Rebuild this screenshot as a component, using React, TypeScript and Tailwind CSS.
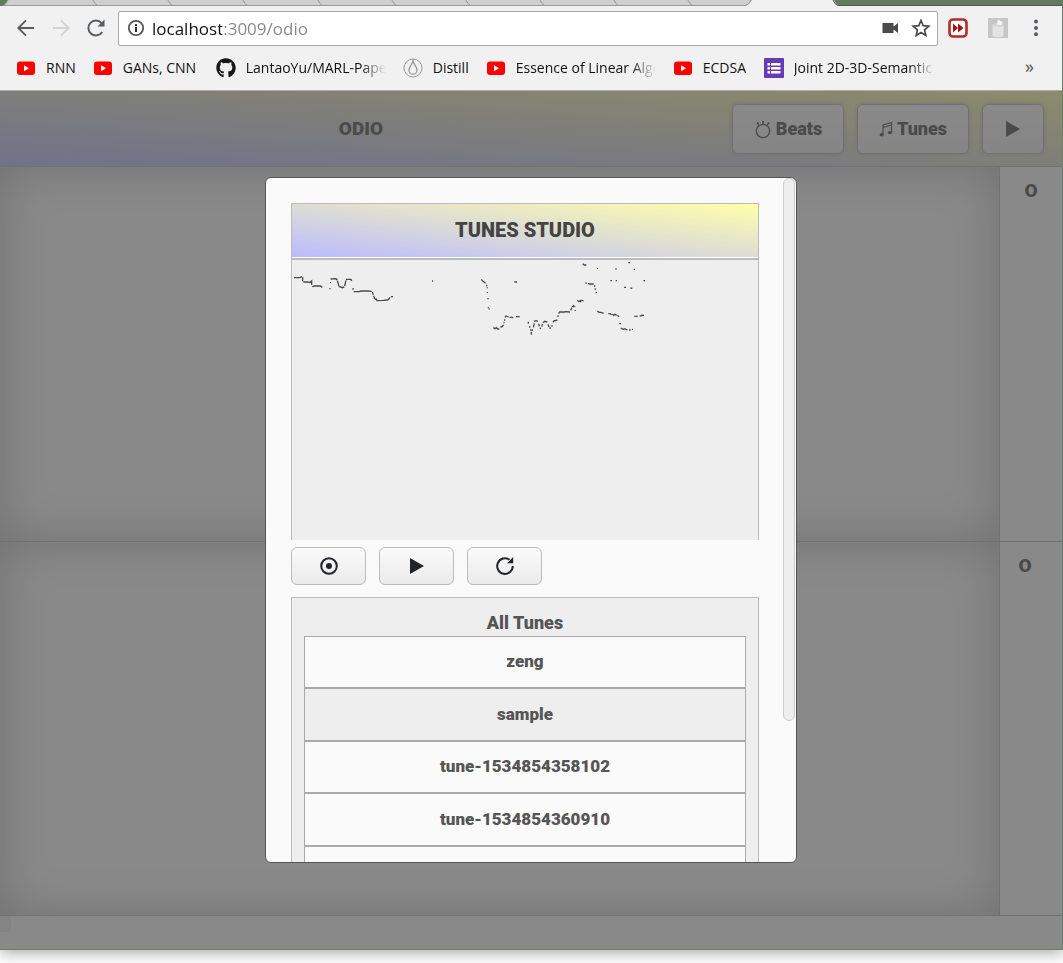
import React from "react";
import { FaGithub } from "react-icons/fa";

const fadeMask = "[mask-image:linear-gradient(90deg,#000_82%,transparent)]";

function YoutubeMark() {
  return (
    <svg viewBox="0 0 20 20" className="size-5 shrink-0" aria-hidden="true">
      <rect x="1" y="3.5" width="18" height="13.5" rx="3" fill="#f00" />
      <path d="M8 7.3v6l5-3z" fill="#fff" />
    </svg>
  );
}

function DistillMark() {
  return (
    <svg viewBox="0 0 20 20" className="size-5 shrink-0" fill="none" stroke="#999" aria-hidden="true">
      <circle cx="10" cy="10" r="9" />
      <path d="M10 3.2c-.9 3.2-4 5.4-4 9a4 4 0 0 0 8 0c0-3.600-3.100-5.800-4-9zM10 1v2.500" strokeWidth="1.300" />
    </svg>
  );
}

function FormMark() {
  return (
    <svg viewBox="0 0 20 20" className="size-5 shrink-0" aria-hidden="true">
      <rect width="20" height="20" rx="1" fill="#673ab7" />
      <g fill="#fff">
        <rect x="3.500" y="5" width="2.500" height="2.500" />
        <rect x="3.500" y="9" width="2.500" height="2.500" />
        <rect x="3.500" y="13" width="2.500" height="2.500" />
        <rect x="7" y="5" width="9.500" height="2.500" />
        <rect x="7" y="9" width="9.500" height="2.500" />
        <rect x="7" y="13" width="9.500" height="2.500" />
      </g>
    </svg>
  );
}

const bookmarks = [
  { label: "RNN", icon: <YoutubeMark />, width: "" },
  { label: "GANs, CNN", icon: <YoutubeMark />, width: "w-[76px]" },
  { label: "LantaoYu/MARL-Papers", icon: <FaGithub className="size-5 shrink-0 text-[#191717]" />, width: "w-[140px] " + fadeMask },
  { label: "Distill", icon: <DistillMark />, width: "w-9" },
  { label: "Essence of Linear Algebra", icon: <YoutubeMark />, width: "w-[140px] " + fadeMask },
  { label: "ECDSA", icon: <YoutubeMark />, width: "w-11" },
  { label: "Joint 2D-3D-Semantic", icon: <FormMark />, width: "w-[141px] " + fadeMask },
];

const separators = [93, 168, 243, 318, 392, 466, 540, 614, 688];

function TabStrip() {
  return (
    <div className="h-1.5 overflow-hidden bg-[#637a60]">
      <svg width="1063" height="6" aria-hidden="true" className="block">
        <path d="M8 0H752L748 5.500H4z" fill="#cfcfcf" />
        <path d="M752 0H834Q836 5 840 6H745Q749 5 752 0z" fill="#f1f1f1" />
        <g fill="none" stroke="#999">
          <path d="M8 0Q6 5 3 5.500H745Q749 5 751 0" />
          {separators.map((x) => (
            <path key={x} d={`M${x} 0q1.500 4 4.500 5.500`} />
          ))}
        </g>
        <path d="M833 0Q835 5 838 5.500H1063" fill="none" stroke="#4a5f48" />
      </svg>
    </div>
  );
}

function AddressBar() {
  return (
    <div className="flex h-11 items-center pr-4 pl-4">
      <button aria-label="Back" className="flex w-5 justify-center">
        <svg viewBox="0 0 20 20" className="size-5" fill="none" stroke="#5a5d60" strokeWidth="1.900">
          <path d="M18 10H2.500M10 2.300L2.300 10l7.700 7.700" />
        </svg>
      </button>
      <button aria-label="Forward" className="ml-[15px] flex w-5 justify-center">
        <svg viewBox="0 0 20 20" className="size-5" fill="none" stroke="#d4d4d4" strokeWidth="1.900">
          <path d="M2 10h15.500M10 2.300l7.700 7.700-7.700 7.700" />
        </svg>
      </button>
      <button aria-label="Reload" className="ml-[15px] flex w-5 justify-center">
        <svg viewBox="0 0 20 20" className="size-5" fill="none" stroke="#5a5d60" strokeWidth="2">
          <path d="M16.200 14A7.500 7.500 0 1 1 15.500 5" />
          <path d="M18.500 1.500V8.500H11.500z" fill="#5a5d60" stroke="none" />
        </svg>
      </button>
      <div className="ml-3 flex h-[35px] flex-1 items-center rounded-xs border border-[#a9a9a9] bg-white pr-1.5 pl-2">
        <svg viewBox="0 0 18 18" className="size-[18px] shrink-0" aria-hidden="true">
          <circle cx="9" cy="9" r="7.200" fill="none" stroke="#555" strokeWidth="1.800" />
          <path d="M8 8h2v5H8zM8 5h2v2H8z" fill="#333" />
        </svg>
        <input
          aria-label="Address"
          defaultValue="localhost:3009/odio"
          className="ml-[7px] h-8 min-w-0 flex-1 bg-[linear-gradient(90deg,#111_70px,#858585_70px)] bg-clip-text font-['Open_Sans','Noto_Sans',sans-serif] text-[17px] text-transparent outline-none"
        />
        <button aria-label="Camera">
          <svg viewBox="0 0 18 18" className="size-[18px]" fill="#4a4a4a">
            <path d="M1.500 4h11v3.500L17 4v10l-4.500-3.500V14h-11z" />
          </svg>
        </button>
        <button aria-label="Bookmark this page" className="ml-3">
          <svg viewBox="0 0 20 20" className="size-5" fill="none" stroke="#4a4a4a" strokeWidth="1.700">
            <path d="M10 2.500l2.200 5.200 5.600.5-4.200 3.700 1.200 5.500-4.800-2.900-4.800 2.900 1.200-5.500-4.200-3.700 5.600-.5z" />
          </svg>
        </button>
      </div>
      <button aria-label="Video speed" className="ml-2.5">
        <svg viewBox="0 0 20 20" className="size-5">
          <rect x="1.500" y="1.500" width="17" height="17" rx="3.500" fill="#fff" stroke="#b52a2a" strokeWidth="2.600" />
          <path d="M5 5.500l5 4.500-5 4.500zM10 5.500l5.500 4.500-5.500 4.500z" fill="#9c1515" />
        </svg>
      </button>
      <button aria-label="Cleaner" className="ml-5">
        <svg viewBox="0 0 20 20" className="size-5">
          <rect width="20" height="20" fill="#c6c6c6" />
          <path d="M4.500 7.500q0-2 5.500-2t5.500 2v9.500q0 2-5.500 2t-5.500-2z" fill="#e4e4e4" />
          <ellipse cx="10" cy="7" rx="5.500" ry="1.700" fill="#d6d6d6" />
          <path d="M9 6.500l1-5 5 3-2 2.500z" fill="#f7f7f7" />
        </svg>
      </button>
      <button aria-label="Menu" className="ml-[18px]">
        <svg viewBox="0 0 20 20" className="size-5" fill="#5a5d60">
          <circle cx="10" cy="3.500" r="2" />
          <circle cx="10" cy="10" r="2" />
          <circle cx="10" cy="16.300" r="2" />
        </svg>
      </button>
    </div>
  );
}

function BookmarksBar() {
  return (
    <nav className="flex h-[41px] items-center border-b border-[#adadad] pr-7 pb-1 pl-4 font-['Open_Sans','Noto_Sans',sans-serif] text-sm text-[#111]">
      <div className="flex min-w-0 flex-1 gap-[17px]">
        {bookmarks.map((b) => (
          <a key={b.label} href="#" className="flex shrink-0 items-center gap-2.5">
            {b.icon}
            <span className={"block overflow-hidden whitespace-nowrap " + b.width}>{b.label}</span>
          </a>
        ))}
      </div>
      <button aria-label="More bookmarks" className="pb-1 text-lg leading-5 text-[#555]">
        »
      </button>
    </nav>
  );
}

function StopwatchIcon() {
  return (
    <svg viewBox="0 0 18 20" className="h-5 w-[18px]" fill="none" stroke="currentColor" strokeWidth="1.300" aria-hidden="true">
      <circle cx="9" cy="12" r="6.700" />
      <path d="M9 5.500V2.500M4.800 6L3.600 4.300M13.200 6l1.200-1.700" />
      <g fill="currentColor" stroke="none">
        <rect x="8" y="2" width="2" height="1.500" />
        <circle cx="3.600" cy="4" r="1.100" />
        <circle cx="14.400" cy="4" r="1.100" />
      </g>
    </svg>
  );
}

function NotesIcon() {
  return (
    <svg viewBox="0 0 14 18" className="h-[18px] w-3.5" fill="none" stroke="currentColor" aria-hidden="true">
      <path d="M4 14.500V5l8.500-2.500V12M4 7.500L12.500 5" strokeWidth="1.200" />
      <ellipse cx="2.800" cy="14.800" rx="2.200" ry="1.700" fill="currentColor" stroke="none" />
      <ellipse cx="11" cy="12.600" rx="2.200" ry="1.700" fill="currentColor" stroke="none" />
    </svg>
  );
}

function PlayIcon() {
  return (
    <svg viewBox="0 0 14 16" className="h-4 w-3.5" fill="currentColor" aria-hidden="true">
      <path d="M0 0l14 8-14 8z" />
    </svg>
  );
}

const headerButton =
  "flex h-[50px] items-center justify-center gap-1 rounded-md border border-[#bbb] bg-linear-to-b from-[#fafafa] to-[#eee] shadow-[0_0_4px_#bbb]";

function AppHeader() {
  return (
    <header className="flex h-[76px] shrink-0 items-center border-b border-[#bbb] bg-[linear-gradient(to_top_right,#bbf,#ffa)] pr-[18px] text-lg font-black text-[#555]">
      <h1 className="flex-1 text-center text-[19px]">ODIO</h1>
      <div className="ml-2.5 flex gap-[13px]">
        <button className={headerButton + " w-28"}>
          <StopwatchIcon />
          Beats
        </button>
        <button className={headerButton + " w-28"}>
          <NotesIcon />
          Tunes
        </button>
        <button aria-label="Play" className={headerButton + " w-[62px]"}>
          <PlayIcon />
        </button>
      </div>
    </header>
  );
}

function Track({ shift }: { shift: string }) {
  return (
    <section className="flex flex-1 border-b border-[#bbb]">
      <div className="flex-1 border-r border-[#bbb] shadow-[inset_0_0_50px_rgba(0,0,0,0.25)]" />
      <div className={"w-[62px] pt-2.5 text-center text-[19px] font-black text-[#555] " + shift}>O</div>
    </section>
  );
}

function PitchPlot() {
  return (
    <svg viewBox="0 0 1398 840" preserveAspectRatio="xMinYMin meet" className="block h-[280px] w-full" role="img" aria-label="Recorded pitch">
      <g fill="none" stroke="#484848" strokeWidth="4">
        <g transform="translate(-36 -210)">
          <path d="M42 263h18l6-3M68 262v12M70 276h12l8 1 5-4v12M97 290l6-2 18 0 6 4M148 296h4M150 278h3M152 267l16-1 4 4" />
          <path d="M172 272l5 17M177 290l5 1 5 2 6-2M194 288l4-17M198 268h8l7 0 2 5M219 294v5M221 305h16l6-2h18l14 1" />
          <path d="M277 306l3 8M281 317l3 9M284 328l5-1 2 5 20-1 10-1 5-2 4-6M333 320h6M456 273h3" />
        </g>
        <g transform="translate(534 -30)">
          <path d="M34 88l5 6 8 6M50 104v5M52 112v3M52 126v3M52 146h4M55 172v3M56 177h3M133 95l3 1h5" />
          <path d="M70 233l5 3 4-3 5 4 4 0M91 230l4 1 6-6M102 217v3M104 208v4M105 202l3-4 8 3M119 202h5l6 1M138 200h11" />
          <path d="M175 215v6M179 228v5M182 238v4M184 246v8M187 238v5M190 232l3-12M192 214l6-2 6 2M206 221l2 8M209 233l4 3M216 230l1-8M219 218l5-4 8 2M234 223l3 8M238 234h5M246 230v-5M249 217l3-5h4l6-2M264 201v-5M266 191l3-5h14l4-1 13 1M302 181l4-8M305 168l5 2 2-5M313 170h3M316 180v3" />
          <path d="M322 151l5 4 4-3 2 5M333 150l8 3M338 41l5 4h6M381 55h3M436 57h4M475 38h5M491 58h4M348 97v4M354 101l5 1h12M374 106v4M376 115v4M377 127h4" />
          <path d="M382 183l5 4h6l8 3M421 92h5M437 92h4M520 92h5M462 112h6M481 114l6 1M415 191h6l4 3M427 193l4 3 4-3 5 3M442 196l5 4M448 221h5M452 234l7 4 5-2 8 4M477 240h5M486 238h3M493 199h10M509 198l6-1 2-3M516 196h6" />
        </g>
      </g>
    </svg>
  );
}

const toolButton =
  "flex h-[38px] w-[75px] items-center justify-center rounded-md border border-[#bbb] bg-linear-to-b from-[#fafafa] to-[#ebebeb] text-[#212529]";

const tunes = ["zeng", "sample", "tune-1534854358102", "tune-1534854360910", "", ""];

function TunesStudio() {
  return (
    <div
      role="dialog"
      aria-label="Tunes Studio"
      className="flex h-4/5 w-1/2 min-w-[532px] overflow-hidden rounded-md border border-[#555] bg-[#fafafa]"
    >
      <div className="min-w-0 flex-1 overflow-hidden pt-[25px] pr-6 pl-[25px]">
        <div className="border border-b-2 border-[#bbb]">
          <h2 className="h-[54px] border-b border-white bg-[linear-gradient(to_top_right,#bbf,#ffa)] text-center text-xl leading-[53px] font-black text-[#444]">
            TUNES STUDIO
          </h2>
        </div>
        <div className="border-x border-[#bbb] bg-[#eee]">
          <PitchPlot />
        </div>
        <div className="mt-[7px] flex gap-[13px]">
          <button aria-label="Record" className={toolButton}>
            <svg viewBox="0 0 18 18" className="size-[18px]" fill="none" stroke="currentColor" strokeWidth="2">
              <circle cx="9" cy="9" r="7.800" />
              <circle cx="9" cy="9" r="3" fill="currentColor" stroke="none" />
            </svg>
          </button>
          <button aria-label="Play tune" className={toolButton}>
            <PlayIcon />
          </button>
          <button aria-label="Reset" className={toolButton}>
            <svg viewBox="0 0 18 18" className="size-[18px]" fill="none" stroke="currentColor" strokeWidth="2">
              <path d="M16.800 9A7.800 7.800 0 1 1 13.500 2.700" />
              <path d="M17.200 0v6.200H11z" fill="currentColor" stroke="none" />
            </svg>
          </button>
        </div>
        <div className="mt-3 border border-[#bbb] bg-[#eee] px-3 pt-3 text-[17px] font-black text-[#555]">
          <h3 className="text-center text-lg leading-[26px]">All Tunes</h3>
          <ul className="grid h-[315px] auto-rows-fr">
            {tunes.map((t, i) => (
              <li key={i} className="flex">
                <button
                  aria-label={t || "Untitled tune"}
                  className={"flex-1 border border-[#aaa] text-center " + (t === "sample" ? "bg-[#eee]" : "bg-[#fafafa]")}
                >
                  {t}
                </button>
              </li>
            ))}
          </ul>
        </div>
      </div>
      <div className="w-[13px] pr-px">
        <div className="h-[543px] max-h-full rounded-full border border-[#ccc] bg-[#eee]" />
      </div>
    </div>
  );
}

export default function App() {
  return (
    <div className="flex h-screen flex-col overflow-hidden bg-white pb-[13px] font-[Roboto,'Liberation_Sans',sans-serif]">
      <div className="flex min-h-0 flex-1 flex-col border-r border-b border-[#6c8068] shadow-[0_3px_14px_rgba(0,0,0,0.35)]">
        <div className="shrink-0 bg-[#f1f1f1]">
          <TabStrip />
          <AddressBar />
          <BookmarksBar />
        </div>
        <main className="relative flex min-h-0 flex-1 flex-col bg-[#fafafa]">
          <AppHeader />
          <Track shift="" />
          <Track shift="pr-3" />
          <div className="h-[33px] shrink-0">
            <div className="h-4 w-[11px] bg-black/5" />
          </div>
          <div className="absolute inset-0 flex items-center justify-center bg-[#444]/62">
            <TunesStudio />
          </div>
        </main>
      </div>
    </div>
  );
}
